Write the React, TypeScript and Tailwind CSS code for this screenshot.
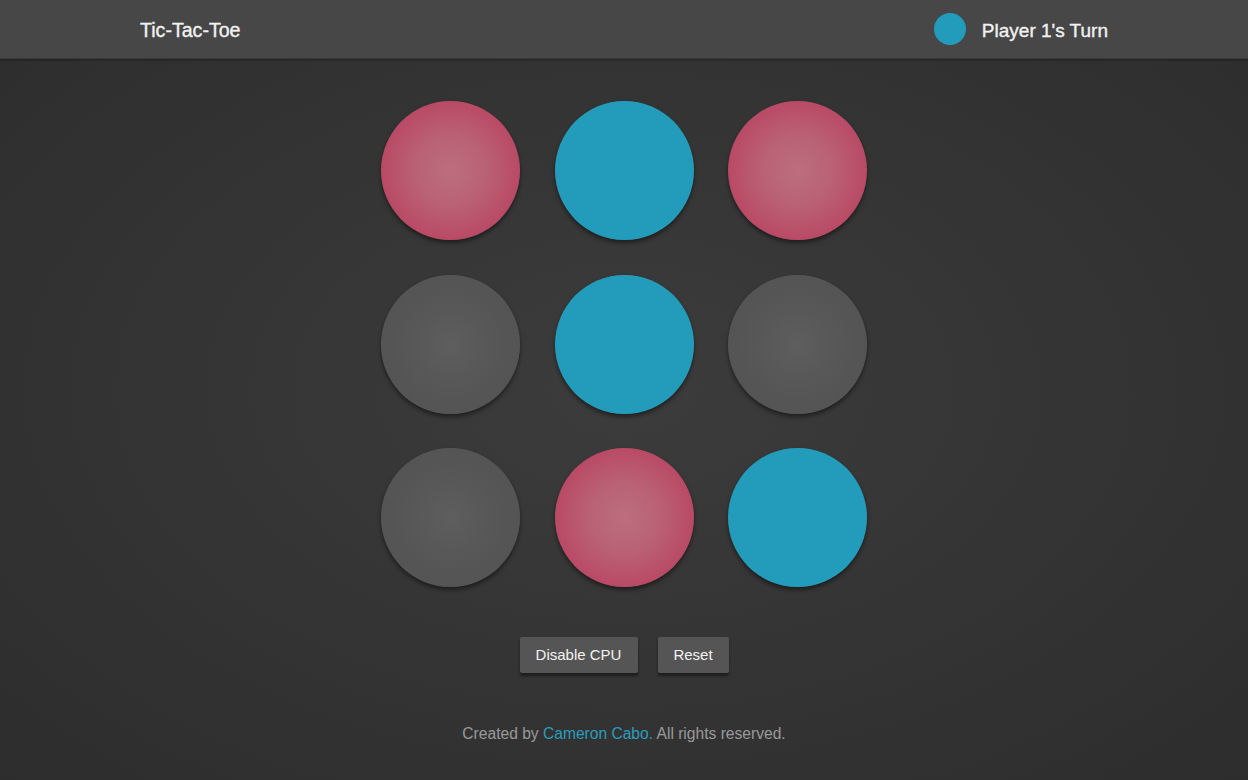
import React from "react";

type Cell = "x" | "o" | "";

const board: Cell[] = ["x", "o", "x", "", "o", "", "", "x", "o"];

function Disc({ v }: { v: Cell }) {
  if (v === "x")
    return (
      <div className="w-[139px] h-[139px] rounded-full bg-[radial-gradient(circle_at_center,#bb6e7e_0%,#ba6275_35%,#b94a66_70%,#b84765_100%)] shadow-[0_3px_4px_rgba(0,0,0,0.45)]" />
    );
  if (v === "o")
    return (
      <div className="w-[139px] h-[139px] rounded-full bg-[radial-gradient(circle_at_center,#239cbc_0%,#239cbc_78%,#2a94b6_100%)] shadow-[0_3px_4px_rgba(0,0,0,0.45)]" />
    );
  return (
    <div className="w-[139px] h-[139px] rounded-full bg-[radial-gradient(circle_at_center,#5e5e5e_0%,#585858_35%,#555555_60%,#535353_100%)] shadow-[0_3px_4px_rgba(0,0,0,0.45)]" />
  );
}

export default function App() {
  return (
    <div
      className="min-h-[780px] w-full bg-[radial-gradient(ellipse_at_50%_50%,#3c3c3c_0%,#353535_45%,#2d2d2d_100%)] text-white"
      style={{ fontFamily: '"Liberation Sans", Arial, sans-serif' }}
    >
      <header className="h-[59px] bg-[#474747] border-b border-[#3a3a3a] shadow-[0_1px_2px_rgba(0,0,0,0.35)]">
        <div className="mx-auto w-[968px] h-full flex items-center justify-between">
          <h1 className="pt-[3px] text-[19.6px] text-[#f2f2f2] leading-none [-webkit-text-stroke:0.35px_#f2f2f2]">Tic-Tac-Toe</h1>
          <div className="flex items-center gap-[16px]">
            <div className="w-[32px] h-[32px] rounded-full bg-[#239cbc]" />
            <span className="pt-[2px] text-[19px] text-[#f2f2f2] leading-none [-webkit-text-stroke:0.35px_#f2f2f2]">Player 1's Turn</span>
          </div>
        </div>
      </header>

      <main className="flex flex-col items-center">
        <div className="mt-[42px] grid grid-cols-[139px_139px_139px] gap-[34.5px]">
          {board.map((v, i) => (
            <Disc key={i} v={v} />
          ))}
        </div>

        <div className="mt-[50px] flex gap-[20px]">
          <button className="h-[36px] w-[118px] bg-[#555555] text-[15px] text-[#f2f2f2] rounded-[2px] shadow-[0_3px_3px_rgba(0,0,0,0.45)]">
            Disable CPU
          </button>
          <button className="h-[36px] w-[71px] bg-[#555555] text-[15px] text-[#f2f2f2] rounded-[2px] shadow-[0_3px_3px_rgba(0,0,0,0.45)]">
            Reset
          </button>
        </div>

        <footer className="mt-[49px] text-[15.6px] text-[#9a9a9a]">
          Created by <span className="text-[#2a9dbd]">Cameron Cabo.</span> All rights reserved.
        </footer>
      </main>
    </div>
  );
}
